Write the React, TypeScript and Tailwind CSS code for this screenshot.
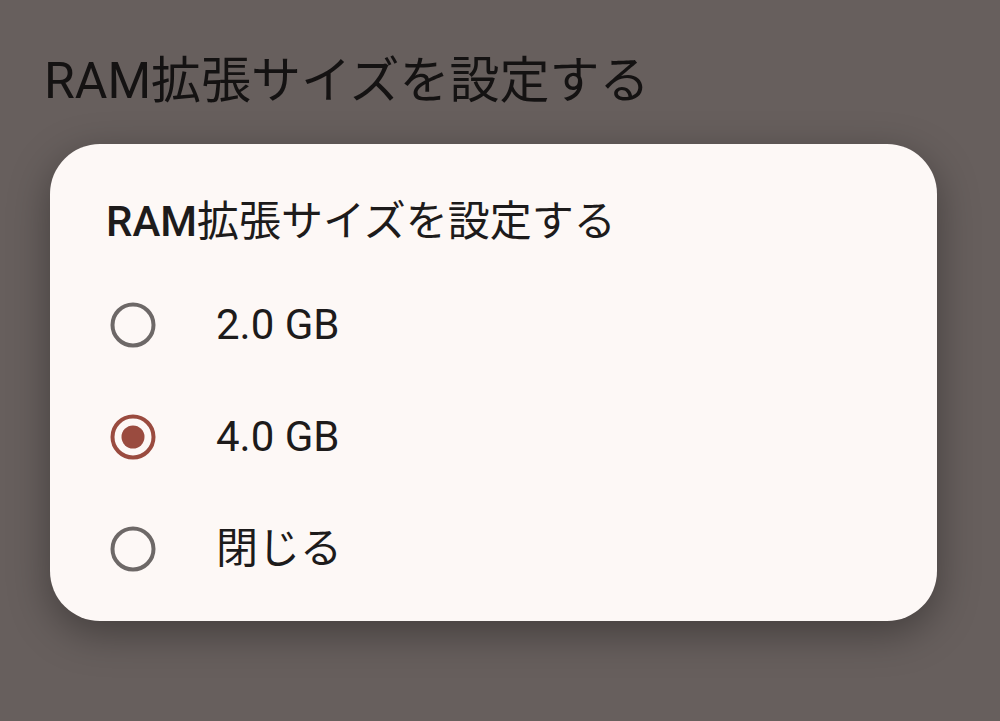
import React from "react";

const FONT = { fontFamily: 'Roboto, "Noto Sans CJK JP", sans-serif' };

function Radio({ selected }: { selected: boolean }) {
  return (
    <svg width="46" height="46" viewBox="0 0 46 46">
      <circle
        cx="23"
        cy="23"
        r="20.5"
        fill="none"
        stroke={selected ? "#9a4b3f" : "#6d6867"}
        strokeWidth="4"
      />
      {selected && <circle cx="23" cy="23" r="11.5" fill="#9a4b3f" />}
    </svg>
  );
}

export default function App() {
  const options = [
    { label: "2.0 GB", selected: false },
    { label: "4.0 GB", selected: true },
    { label: "閉じる", selected: false },
  ];
  return (
    <div
      className="w-[1000px] h-[721px] bg-[#675f5d] overflow-hidden"
      style={FONT}
    >
      <div className="pl-[44px] pt-[51px] text-[50px] leading-[60px] text-[#141212]">
        RAM拡張サイズを設定する
      </div>
      <div className="ml-[50px] mt-[33px] w-[887px] h-[477px] rounded-[50px] bg-[#fdf8f6] shadow-[0_12px_40px_rgba(0,0,0,0.35)]">
        <div className="pl-[56px] pt-[50px] pb-[19px] text-[42px] leading-[56px] text-[#1d1b1b]">
          <span className="font-medium">RAM</span>拡張サイズを設定する
        </div>
        <div className="flex flex-col">
          {options.map((o) => (
            <div key={o.label} className="h-[112px] flex items-center pl-[60px]">
              <Radio selected={o.selected} />
              <span className="ml-[60px] text-[42px] leading-[56px] text-[#1d1b1b]">
                {o.label}
              </span>
            </div>
          ))}
        </div>
      </div>
    </div>
  );
}
